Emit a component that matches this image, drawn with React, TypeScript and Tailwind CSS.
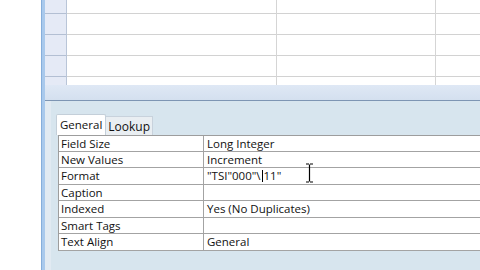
import React from "react";

const props: { name: string; value: React.ReactNode; h: string }[] = [
  { name: "Field Size", value: "Long Integer", h: "h-[16px]" },
  { name: "New Values", value: "Increment", h: "h-[16px]" },
  {
    name: "Format",
    value: (
      <span className="flex items-center">
        "TSI"000"\<span className="inline-block w-px h-[12px] bg-black mx-px" />11"
      </span>
    ),
    h: "h-[17px]",
  },
  { name: "Caption", value: "", h: "h-[16px]" },
  { name: "Indexed", value: "Yes (No Duplicates)", h: "h-[17px]" },
  { name: "Smart Tags", value: "", h: "h-[16px]" },
  { name: "Text Align", value: "General", h: "h-[17px]" },
];

const gridRows = ["h-[14px]", "h-[21px]", "h-[21px]", "h-[21px]", "h-[8px]"];

export default function App() {
  return (
    <div
      className="w-[480px] h-[270px] flex bg-white overflow-hidden text-[#111]"
      style={{ fontFamily: '"Open Sans", "Noto Sans", sans-serif' }}
    >
      <div className="w-[41px] shrink-0 bg-white" />
      <div className="w-[4px] shrink-0 bg-[#a9c9ec] border-l border-[#86aedb]" />
      <div className="flex-1 flex flex-col">
        {/* upper design grid */}
        <div className="h-[85px] flex bg-[#dfe6f2]">
          <div className="w-[22px] shrink-0 flex flex-col bg-[#e5eaf6] border-r border-[#b9c5d8]">
            {gridRows.map((h, i) => (
              <div key={i} className={`${h} shrink-0 border-b border-[#b3bfd3] last:border-b-0`} />
            ))}
          </div>
          <div className="flex-1 flex bg-white">
            <div className="w-[210px] flex flex-col border-r border-[#d5d5d5]">
              {gridRows.map((h, i) => (
                <div key={i} className={`${h} shrink-0 border-b border-[#d2d2d2] last:border-b-0`} />
              ))}
            </div>
            <div className="w-[159px] flex flex-col border-r border-[#d5d5d5]">
              {gridRows.map((h, i) => (
                <div key={i} className={`${h} shrink-0 border-b border-[#d2d2d2] last:border-b-0`} />
              ))}
            </div>
            <div className="flex-1 flex flex-col">
              {gridRows.map((h, i) => (
                <div key={i} className={`${h} shrink-0 border-b border-[#d2d2d2] last:border-b-0`} />
              ))}
            </div>
          </div>
        </div>
        <div className="h-[16px] bg-gradient-to-b from-[#dfe8f5] to-[#d4e0ef] border-b border-[#7d95b3]" />

        {/* property sheet */}
        <div className="flex-1 flex bg-[#d7e5ee]">
          <div className="w-[6px] bg-[#e1eaf2]" />
          <div className="flex-1 flex flex-col pt-[12px] pl-[5px]">
            <div className="flex items-end h-[22px] text-[11.5px]">
              <div className="h-[21px] px-[3px] pt-[1px] bg-white border border-b-0 border-[#c4cfd9] rounded-t-[2px] leading-[18px]">
                General
              </div>
              <div className="h-[19px] px-[2px] bg-[#e9eef2] border-t border-r border-[#c8d2dc] leading-[20px] text-[12px]">
                Lookup
              </div>
            </div>
            <div className="ml-[2px] bg-white border-t border-l border-[#9d9d9d] text-[11.5px]">
              {props.map((p) => (
                <div key={p.name} className={`${p.h} flex border-b border-[#a3a3a3]`}>
                  <div className="w-[145px] shrink-0 pl-[2px] border-r border-[#a3a3a3] leading-[15px]">
                    {p.name}
                  </div>
                  <div className="flex-1 pl-[3px] leading-[15px]">{p.value}</div>
                </div>
              ))}
            </div>
          </div>
        </div>
      </div>

      {/* mouse I-beam cursor */}
      <svg className="absolute left-[305px] top-[163px]" width="9" height="20" viewBox="0 0 9 20">
        <path d="M1 1h3M5 1h3M4.5 1.5v17M1 19h3M5 19h3" stroke="#000" strokeWidth="1.2" fill="none" />
      </svg>
    </div>
  );
}
